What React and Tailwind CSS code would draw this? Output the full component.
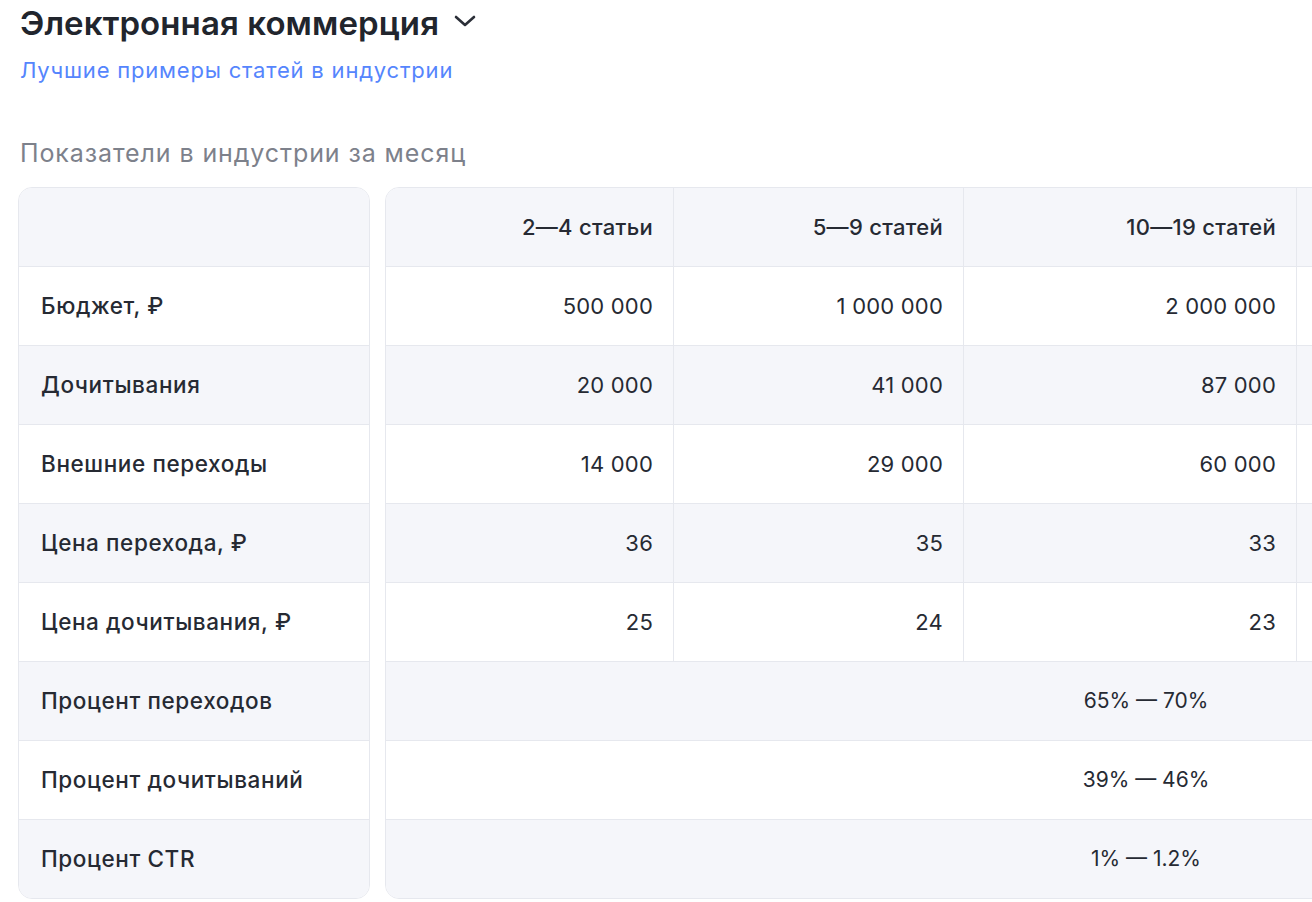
import React from "react";

const cols = [
  { w: "w-[288px]" },
  { w: "w-[290px]" },
  { w: "w-[333px]" },
  { w: "w-[305px]" },
  { w: "w-[304px]" },
];

const header = ["2—4 статьи", "5—9 статей", "10—19 статей", "20—49 статей", "50+ статей"];

const rows = [
  { label: "Бюджет, ₽", vals: ["500 000", "1 000 000", "2 000 000", "5 000 000", "10 000 000"] },
  { label: "Дочитывания", vals: ["20 000", "41 000", "87 000", "220 000", "450 000"] },
  { label: "Внешние переходы", vals: ["14 000", "29 000", "60 000", "150 000", "310 000"] },
  { label: "Цена перехода, ₽", vals: ["36", "35", "33", "33", "32"] },
  { label: "Цена дочитывания, ₽", vals: ["25", "24", "23", "23", "22"] },
  { label: "Процент переходов", merged: "65% — 70%" },
  { label: "Процент дочитываний", merged: "39% — 46%" },
  { label: "Процент CTR", merged: "1% — 1.2%" },
];

function rowBg(i) {
  return i % 2 === 0 ? "bg-[#f5f6fa]" : "bg-white";
}

export default function App() {
  return (
    <div
      className="w-[1312px] h-[902px] overflow-hidden bg-white text-[#262a33]"
      style={{ fontFamily: "Inter, 'Noto Sans', sans-serif" }}
    >
      <div className="pl-[20px] pt-[3px]">
        <div className="flex items-center gap-[14px]">
          <h1 className="text-[33px] leading-[40px] font-semibold text-[#21252d] tracking-[0.1px]">
            Электронная коммерция
          </h1>
          <svg width="24" height="16" viewBox="0 0 24 16" className="-mt-[4px]">
            <path d="M3 4 L12 12 L21 4" fill="none" stroke="#2b2f38" strokeWidth="2.6" strokeLinecap="round" strokeLinejoin="round" />
          </svg>
        </div>
        <a className="block mt-[13px] text-[22px] leading-[28px] text-[#5585fd] tracking-[0.8px]">
          Лучшие примеры статей в индустрии
        </a>
        <div className="mt-[53px] text-[25px] leading-[32px] text-[#7d818b] tracking-[0.9px]">
          Показатели в индустрии за месяц
        </div>
      </div>

      <div className="flex gap-[15px] pl-[18px] mt-[18px]">
        {/* Left card */}
        <div className="w-[352px] shrink-0 rounded-[14px] border border-[#e6e8ee] overflow-hidden">
          <div className={`h-[78px] box-content border-b border-[#e6e8ee] ${rowBg(0)}`} />
          {rows.map((r, i) => (
            <div
              key={r.label}
              className={`h-[78px] flex items-center px-[22px] text-[22.5px] tracking-[0.6px] font-medium text-[#262a33] ${rowBg(i + 1)} ${i < rows.length - 1 ? "border-b border-[#e6e8ee] box-content" : ""}`}
            >
              {r.label}
            </div>
          ))}
        </div>

        {/* Right card */}
        <div className="w-[1522px] shrink-0 rounded-[14px] border border-[#e6e8ee] overflow-hidden">
          <div className={`flex h-[78px] box-content border-b border-[#e6e8ee] ${rowBg(0)}`}>
            {header.map((h, ci) => (
              <div
                key={h}
                className={`${cols[ci].w} shrink-0 flex items-center justify-end pr-[20px] text-[22px] tracking-[0.3px] font-medium text-[#262a33] ${ci < 4 ? "border-r border-[#e6e8ee]" : ""}`}
              >
                {h}
              </div>
            ))}
          </div>
          {rows.map((r, i) => (
            <div
              key={r.label}
              className={`flex h-[78px] ${rowBg(i + 1)} ${i < rows.length - 1 ? "border-b border-[#e6e8ee] box-content" : ""}`}
            >
              {r.merged ? (
                <div className="flex-1 flex items-center justify-center text-[21px] text-[#262a33]">
                  {r.merged}
                </div>
              ) : (
                r.vals.map((v, ci) => (
                  <div
                    key={ci}
                    className={`${cols[ci].w} shrink-0 flex items-center justify-end pr-[20px] text-[22px] tracking-[0.2px] text-[#262a33] ${ci < 4 ? "border-r border-[#e6e8ee]" : ""}`}
                  >
                    {v}
                  </div>
                ))
              )}
            </div>
          ))}
        </div>
      </div>
    </div>
  );
}
